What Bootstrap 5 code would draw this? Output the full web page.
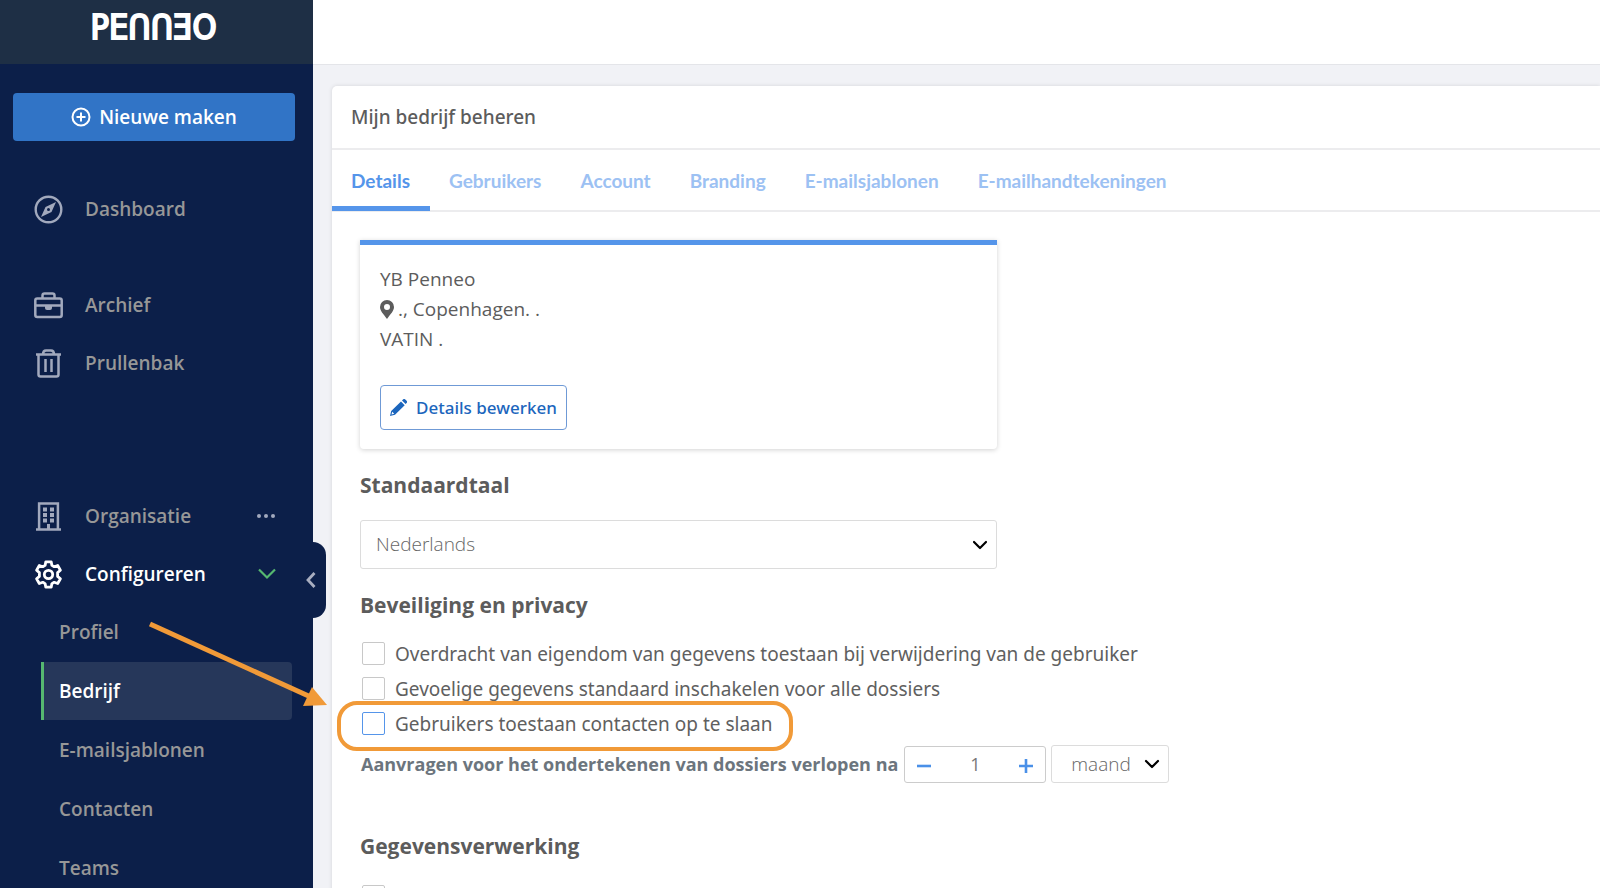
<!DOCTYPE html>
<html lang="nl">
<head>
<meta charset="utf-8">
<meta name="viewport" content="width=device-width, initial-scale=1">
<title>Penneo – Mijn bedrijf beheren</title>
<link href="https://cdn.jsdelivr.net/npm/bootstrap@5.3.0/dist/css/bootstrap.min.css" rel="stylesheet">
<style>
  :root { --navy: #0c1f49; --blue: #5595ea; --ink: #5c5c5c; --line: #ececee; --orange: #f19a38; }
  html { scrollbar-width: none; }
  ::-webkit-scrollbar { display: none; }
  body { font-family: "Open Sans", sans-serif; font-size: 20px; line-height: 30px; color: var(--ink); background: #f1f2f6; overflow-x: hidden; }

  /* Sidebar */
  .app-side { width: 313px; background: var(--navy); z-index: 5; }
  .brand-bar { height: 64px; background: #1e2f45; padding: 0 6px 10px 0; }
  .brand-word { font: 34px/40px "DejaVu Sans Condensed", "DejaVu Sans", sans-serif; color: #fff; -webkit-text-stroke: 2px #fff; }
  .btn-new { height: 48px; margin: 29px 18px 0 13px; background: #3174c6; color: #fff; font-size: 19px; font-weight: 600; border: 0; border-radius: 4px; }
  .btn-new:hover { background: #2967b5; color: #fff; }
  .side-item { height: 58px; padding: 0 37px 0 34px; gap: 22px; color: #979797; font-size: 19px; font-weight: 600; text-decoration: none; }
  .side-item svg { color: #a2a9bd; flex: none; }
  .side-item.active, .side-item.active .side-icon { color: #fff; }
  .side-item:hover { color: #fff; }
  .side-sub { margin-left: 41px; margin-right: 21px; gap: 1px; }
  .side-sub .side-item { padding: 0 0 0 15px; border-left: 3px solid transparent; }
  .side-sub .active { background: #26375a; border-left-color: #56b870; border-radius: 0 4px 4px 0; }
  .group-a { margin-top: 39px; }
  .group-b { margin-top: 38px; }
  .group-c { margin-top: 95px; }
  .side-toggle { left: 300px; top: 542px; width: 26px; height: 76px; background: var(--navy); border: 0; border-radius: 0 13px 13px 0; color: #a9aec0; padding: 0 4px 0 0; }
  .pointer { left: 103px; top: 13px; }

  /* Main */
  .top-bar { height: 65px; background: #fff; border-bottom: 1px solid #e4e5e9; }
  .panel { margin: 21px 0 0 19px; background: #fff; border-radius: 5px 0 0 0; box-shadow: 0 0 4px rgba(0,0,0,.12); }
  .panel-title { font-family: "Noto Sans", "Open Sans", sans-serif; font-size: 19px; font-weight: 500; line-height: 30px; padding: 16px 19px; margin: 0; border-bottom: 2px solid var(--line); color: #5c5c5c; }
  .panel-tabs { border-bottom: 2px solid var(--line); }
  .panel-tabs .nav-link { font: 700 19px/30px Lato, sans-serif; color: #9cc1f3; padding: 16px 20px 10px 19px; border-bottom: 5px solid transparent; margin-bottom: -1px; }
  .panel-tabs .nav-link.active { color: var(--blue); border-bottom-color: var(--blue); }
  .panel-body { padding: 28px 28px 40px; }
  .narrow { width: 637px; max-width: 100%; }
  .info { border-top: 5px solid var(--blue); border-radius: 0 0 4px 4px; box-shadow: 0 1px 5px rgba(0,0,0,.18); padding: 19px 20px; font-size: 19px; }
  .btn-edit { height: 45px; margin-top: 31px; border: 1px solid #6f9ad6; border-radius: 4px; color: #1c66bd; background: #fff; font-family: "Noto Sans", "Open Sans", sans-serif; font-size: 17px; font-weight: 500; padding: 0 9px; gap: 9px; }
  .sec { font-size: 21px; font-weight: 700; line-height: 30px; margin: 21px 0 0; color: #5c5c5c; }
  .form-select { color: #666; font-weight: 300; border-color: #dcdcdc; border-radius: 3px; background-size: 16px 16px;
    background-image: url("data:image/svg+xml,%3csvg xmlns='http://www.w3.org/2000/svg' viewBox='0 0 16 16'%3e%3cpath fill='none' stroke='%23000' stroke-width='2.2' stroke-linecap='round' stroke-linejoin='round' d='m2 5 6 6 6-6'/%3e%3c/svg%3e"); }
  .sel-lang { height: 49px; margin-top: 20px; font-size: 19px; padding-left: 15px; background-position: right 8px center; }
  .opt { height: 35px; gap: 10px; padding-left: 2px; font-family: "Noto Sans", "Open Sans", sans-serif; font-size: 19px; color: #606060; }
  .opt .form-check-input { width: 23px; height: 23px; margin: 0; border: 1px solid #c8c8c8; border-radius: 2px; flex: none; }
  .opt .form-check-input.hot { border-color: var(--blue); }
  .ring { left: -23px; top: -5px; width: 456px; height: 50px; border: 4px solid var(--orange); border-radius: 20px; pointer-events: none; }
  .expire { gap: 5px; margin-top: 4px; }
  .expire-label { font-size: 18px; font-weight: 700; color: #6c757d; padding: 0 1px; }
  .stepper { width: 142px; height: 37px; border: 1px solid #ccc; border-radius: 3px; }
  .stepper button { width: 38px; flex: none; border: 0; background: none; padding: 0; line-height: 1; color: #4a90e8; }
  .stepper input { min-width: 0; border: 0; text-align: center; color: #777; font-size: 18px; padding: 0; background: none; }
  .sel-unit { width: 118px; height: 38px; font-size: 19px; padding: 0 30px 0 19px; background-position: right 8px center; }
  .last-opts { margin-top: 18px; }
</style>
</head>
<body>
<div class="d-flex min-vh-100">
  <aside class="app-side position-relative flex-shrink-0 d-flex flex-column">
    <div class="brand-bar d-flex align-items-center justify-content-center"><span class="brand-word">PEՈՈƎO</span></div>
    <button class="btn btn-new d-flex align-items-center justify-content-center gap-2" type="button">
      <svg width="20" height="20" viewBox="0 0 20 20" fill="none" stroke="currentColor" stroke-width="2"><circle cx="10" cy="10" r="8.5"/><path d="M10 5.500v9M5.500 10h9"/></svg>
      Nieuwe maken
    </button>

    <nav class="group-a">
      <a class="side-item d-flex align-items-center" href="#">
        <svg class="side-icon" width="29" height="29" viewBox="0 0 29 29"><circle cx="14.500" cy="14.500" r="12.800" fill="none" stroke="currentColor" stroke-width="2.400"/><path fill="currentColor" fill-rule="evenodd" d="M22 7 17.500 17 7 22l4.500-10zM14.500 13a1.500 1.500 0 1 0 0 3 1.500 1.500 0 0 0 0-3z"/></svg>
        Dashboard
      </a>
    </nav>
    <nav class="group-b">
      <a class="side-item d-flex align-items-center" href="#">
        <svg class="side-icon" width="29" height="29" viewBox="0 0 29 29" fill="none" stroke="currentColor" stroke-width="2.500"><rect x="1.300" y="7.500" width="26.400" height="18.500" rx="2"/><path d="M8.500 7.500V4.500a2 2 0 0 1 2-2h8a2 2 0 0 1 2 2v3M1.500 14.500h26"/><path fill="currentColor" stroke="none" d="M11 14.500h7v2.500a2 2 0 0 1-2 2h-3a2 2 0 0 1-2-2z"/></svg>
        Archief
      </a>
      <a class="side-item d-flex align-items-center" href="#">
        <svg class="side-icon" width="29" height="29" viewBox="0 0 29 29" fill="none" stroke="currentColor" stroke-width="2.500"><path d="M2 5.500h25M4.500 5.500v20a2 2 0 0 0 2 2h16a2 2 0 0 0 2-2v-20M9 5.500c0-3 1.500-4 3-4h5c1.500 0 3 1 3 4M11.500 10v13M17.500 10v13"/></svg>
        Prullenbak
      </a>
    </nav>
    <nav class="group-c">
      <a class="side-item d-flex align-items-center" href="#">
        <svg class="side-icon" width="29" height="29" viewBox="0 0 29 29"><path fill="none" stroke="currentColor" stroke-width="2.500" d="M5.100 27V1.600h18.800V27M2 27.400h25"/><path fill="currentColor" d="M9 5.500h4v4H9zM16 5.500h4v4h-4zM9 11h4v4H9zM16 11h4v4h-4zM9 16.500h4v4H9zM16 16.500h4v4h-4zM13 22h3v5h-3z"/></svg>
        <span class="flex-grow-1">Organisatie</span>
        <svg width="20" height="6" viewBox="0 0 20 6" fill="currentColor"><circle cx="3" cy="3" r="2"/><circle cx="10" cy="3" r="2"/><circle cx="17" cy="3" r="2"/></svg>
      </a>
      <a class="side-item active d-flex align-items-center" href="#">
        <svg class="side-icon" width="29" height="29" viewBox="0 0 29 29" fill="none" stroke="currentColor" stroke-width="2.800" stroke-linejoin="round"><path d="M11.800 1.800h5.400l.7 3.600 2.300 1.300 3.500-1.200 2.700 4.700-2.800 2.400v3.800l2.800 2.400-2.700 4.700-3.500-1.200-2.300 1.300-.7 3.600h-5.400l-.7-3.600-2.300-1.300-3.500 1.200-2.700-4.700 2.800-2.400v-3.800L2.600 10.200l2.700-4.700 3.500 1.200 2.300-1.300z"/><circle cx="14.500" cy="14.500" r="4.200"/></svg>
        <span class="flex-grow-1">Configureren</span>
        <svg width="18" height="12" viewBox="0 0 18 12" fill="none" stroke="#56b870" stroke-width="2.200"><path d="m1 1.500 8 8 8-8"/></svg>
      </a>
      <div class="side-sub d-flex flex-column">
        <a class="side-item position-relative d-flex align-items-center" href="#">Profiel
          <svg class="pointer position-absolute pe-none" width="184" height="92" viewBox="0 0 184 92" aria-hidden="true"><path d="M3 8 166 82" stroke="#f19a38" stroke-width="5"/><path d="m165 71-9 19 24-1z" fill="#f19a38"/></svg>
        </a>
        <a class="side-item active d-flex align-items-center" href="#">Bedrijf</a>
        <a class="side-item d-flex align-items-center" href="#">E-mailsjablonen</a>
        <a class="side-item d-flex align-items-center" href="#">Contacten</a>
        <a class="side-item d-flex align-items-center" href="#">Teams</a>
      </div>
    </nav>
    <button class="side-toggle position-absolute d-flex align-items-center justify-content-center" type="button" aria-label="Menu inklappen">
      <svg width="10" height="16" viewBox="0 0 10 16" fill="none" stroke="currentColor" stroke-width="2.800"><path d="M8.500 1 2 8l6.500 7"/></svg>
    </button>
  </aside>

  <div class="flex-grow-1 d-flex flex-column">
    <header class="top-bar"></header>
    <main class="panel flex-grow-1">
      <h1 class="panel-title">Mijn bedrijf beheren</h1>
      <ul class="nav panel-tabs">
        <li class="nav-item"><a class="nav-link active" href="#">Details</a></li>
        <li class="nav-item"><a class="nav-link" href="#">Gebruikers</a></li>
        <li class="nav-item"><a class="nav-link" href="#">Account</a></li>
        <li class="nav-item"><a class="nav-link" href="#">Branding</a></li>
        <li class="nav-item"><a class="nav-link" href="#">E-mailsjablonen</a></li>
        <li class="nav-item"><a class="nav-link" href="#">E-mailhandtekeningen</a></li>
      </ul>
      <div class="panel-body">
        <section class="info narrow">
          <div>YB Penneo</div>
          <div class="d-flex align-items-center"><svg class="me-1" width="14" height="19" viewBox="0 0 14 19" fill="currentColor"><path fill-rule="evenodd" d="M7 0a7 7 0 0 1 7 7c0 4-3.500 7-7 12-3.500-5-7-8-7-12a7 7 0 0 1 7-7zm0 4a3 3 0 1 0 0 6 3 3 0 0 0 0-6z"/></svg>., Copenhagen. .</div>
          <div>VATIN .</div>
          <button class="btn btn-edit d-flex align-items-center" type="button">
            <svg width="17" height="17" viewBox="0 0 17 17"><path fill="currentColor" fill-rule="evenodd" d="m11 2.500 3.700 3.700L5 15.800 0 17l1.200-5zM2.200 12.800l-.7 2.700 2.700-.7zM12 1.500l1-1a1.600 1.600 0 0 1 2.300 0l1.300 1.300a1.600 1.600 0 0 1 0 2.300l-1 1z"/></svg>
            Details bewerken
          </button>
        </section>

        <label class="sec d-block" for="lang">Standaardtaal</label>
        <select class="form-select sel-lang narrow" id="lang"><option>Nederlands</option></select>

        <h2 class="sec">Beveiliging en privacy</h2>
        <div class="mt-3">
          <div class="opt d-flex align-items-center"><input class="form-check-input" type="checkbox" id="o1"><label for="o1">Overdracht van eigendom van gegevens toestaan bij verwijdering van de gebruiker</label></div>
          <div class="opt d-flex align-items-center"><input class="form-check-input" type="checkbox" id="o2"><label for="o2">Gevoelige gegevens standaard inschakelen voor alle dossiers</label></div>
          <div class="opt position-relative d-flex align-items-center"><input class="form-check-input hot" type="checkbox" id="o3"><label for="o3">Gebruikers toestaan contacten op te slaan</label><span class="ring position-absolute"></span></div>
        </div>
        <div class="expire d-flex align-items-center">
          <label class="expire-label" for="amount">Aanvragen voor het ondertekenen van dossiers verlopen na</label>
          <div class="stepper d-flex">
            <button type="button" aria-label="Minder"><svg width="14" height="14" viewBox="0 0 14 14" stroke="currentColor" stroke-width="2.600"><path d="M0 7h14"/></svg></button>
            <input class="form-control flex-grow-1" type="text" id="amount" value="1">
            <button type="button" aria-label="Meer"><svg width="14" height="14" viewBox="0 0 14 14" stroke="currentColor" stroke-width="2.600"><path d="M0 7h14M7 0v14"/></svg></button>
          </div>
          <select class="form-select sel-unit" aria-label="Eenheid"><option>maand</option></select>
        </div>

        <h2 class="sec mt-5">Gegevensverwerking</h2>
        <div class="last-opts">
          <div class="opt d-flex align-items-center"><input class="form-check-input" type="checkbox" id="o4"><label for="o4">Automatische gegevensverwerking uitschakelen</label></div>
        </div>
      </div>
    </main>
  </div>
</div>
<script src="https://cdn.jsdelivr.net/npm/bootstrap@5.3.0/dist/js/bootstrap.bundle.min.js"></script>
</body>
</html>
